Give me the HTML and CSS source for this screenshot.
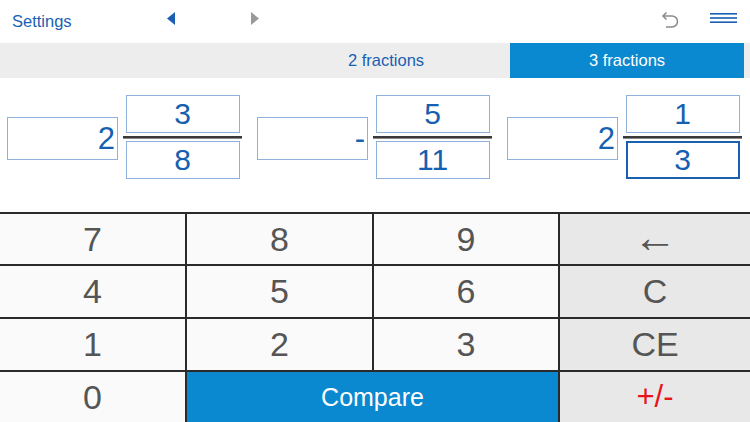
FILE: index.html
```html
<!DOCTYPE html>
<html>
<head>
<meta charset="utf-8">
<link rel="stylesheet" href="styles.css">
</head>
<body>
<div class="app">
  <header class="topbar">
    <span class="settings">Settings</span>
    <div class="nav">
      <svg class="tri" width="8" height="13" viewBox="0 0 8 13"><polygon points="8,0 8,13 0,6.5" fill="#1a5fb4"/></svg>
      <svg class="tri tri-r" width="8" height="13" viewBox="0 0 8 13"><polygon points="0,0 0,13 8,6.5" fill="#9a9a9a"/></svg>
    </div>
    <div class="actions">
      <svg class="undo" width="18" height="18" viewBox="0 0 18 18"><path d="M2 6 H11 A5.5 5.5 0 0 1 11 17 H5" fill="none" stroke="#8a8a8a" stroke-width="1.5"/><path d="M5.5 2.5 L2 6 L5.5 9.5" fill="none" stroke="#8a8a8a" stroke-width="1.5"/></svg>
      <svg class="menu" width="27" height="11" viewBox="0 0 27 11"><rect x="0" y="0" width="27" height="1.6" fill="#1a5fb4"/><rect x="0" y="4.2" width="27" height="1.6" fill="#1a5fb4"/><rect x="0" y="8.4" width="27" height="1.6" fill="#1a5fb4"/></svg>
    </div>
  </header>
  <nav class="tabs">
    <div class="tab">2 fractions</div>
    <div class="tab tab-active">3 fractions</div>
  </nav>
  <section class="fractions">
    <div class="group">
      <div class="whole">2</div>
      <div class="frac">
        <div class="box">3</div>
        <div class="bar"></div>
        <div class="box">8</div>
      </div>
    </div>
    <div class="group">
      <div class="whole">-</div>
      <div class="frac">
        <div class="box">5</div>
        <div class="bar"></div>
        <div class="box">11</div>
      </div>
    </div>
    <div class="group">
      <div class="whole">2</div>
      <div class="frac">
        <div class="box">1</div>
        <div class="bar"></div>
        <div class="box box-active">3</div>
      </div>
    </div>
  </section>
  <section class="keypad">
    <div class="key">7</div><div class="key">8</div><div class="key">9</div><div class="key key-fn key-back">←</div>
    <div class="key">4</div><div class="key">5</div><div class="key">6</div><div class="key key-fn">C</div>
    <div class="key">1</div><div class="key">2</div><div class="key">3</div><div class="key key-fn">CE</div>
    <div class="key">0</div><div class="key key-compare">Compare</div><div class="key key-fn key-sign">+/-</div>
  </section>
</div>
</body>
</html>
```

FILE: styles.css
```css
* { box-sizing: border-box; }
html, body { margin: 0; padding: 0; background: #fff; }
body { font-family: "Liberation Sans", Arial, sans-serif; width: 750px; height: 422px; overflow: hidden; }
.app { width: 750px; height: 422px; display: flex; flex-direction: column; }

.topbar { height: 43px; display: flex; align-items: center; }
.settings { color: #1a5fb4; font-size: 16.5px; margin-left: 12px; width: 155px; }
.nav { display: flex; align-items: center; gap: 76px; margin-top: -6px; }
.tri { display: block; }
.actions { margin-left: auto; display: flex; align-items: center; margin-right: 13px; margin-top: -7px; }
.undo { display: block; margin-right: 31px; margin-top: 2px; }
.menu { display: block; }

.tabs { height: 35px; background: #ededed; display: flex; padding-left: 262px; }
.tab { flex: 0 0 248px; display: flex; align-items: center; justify-content: center; font-size: 16.5px; color: #1a5fb4; }
.tab-active { flex: 0 0 234px; background: #0a88d0; color: #fff; }

.fractions { height: 134px; display: flex; }
.group { width: 250px; padding-left: 7px; padding-top: 17px; display: flex; align-items: flex-start; }
.whole { width: 111px; height: 43px; margin-top: 22px; border: 1px solid #8fb2dd; color: #1560b0; font-size: 31px; text-align: right; padding-right: 2px; line-height: 41px; }
.frac { width: 119px; margin-left: 5px; display: flex; flex-direction: column; align-items: center; }
.box { width: 114px; height: 38px; border: 1px solid #8fb2dd; color: #1560b0; font-size: 30px; text-align: center; line-height: 36px; }
.box-active { border: 2px solid #1a5fb4; line-height: 34px; }
.bar { width: 119px; height: 3px; background: #3a3a3a; margin: 3px 0 2px; border-bottom: 1px solid #888; }

.keypad { flex: 1; display: grid; grid-template-columns: 185px 185px 184px 1fr; grid-template-rows: 50px 51px 51px 1fr; gap: 2px; background: #2a2a2a; padding-top: 2px; }
.key { background: #fafafa; color: #555; font-size: 34px; display: flex; align-items: center; justify-content: center; }
.key-fn { background: #e8e8e8; }
.key-back { font-size: 44px; padding-bottom: 4px; }
.key-compare { background: #0a88d0; color: #fff; font-size: 25px; grid-column: span 2; }
.key-sign { color: #e8141c; font-size: 31px; }
```
